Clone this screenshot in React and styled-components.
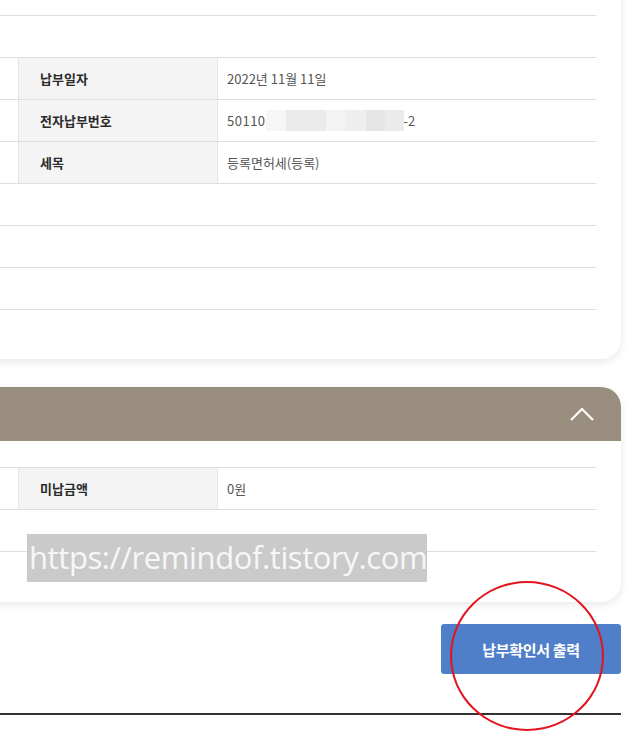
import React from 'react';
import styled, { createGlobalStyle } from 'styled-components';

const Global = createGlobalStyle`
  html, body {
    margin: 0;
    padding: 0;
    background: #fff;
    overflow: hidden;
  }
  body {
    font-family: "Noto Sans CJK KR", "Noto Sans", sans-serif;
    color: #333;
  }
`;

const Page = styled.div`
  width: 639px;
  height: 739px;
  overflow: hidden;
  position: relative;
`;

const Inner = styled.div`
  margin-left: -40px;
  width: 661px;
  display: flex;
  flex-direction: column;
`;

const Card = styled.div`
  position: relative;
  background: #fff;
  border-radius: 0 0 20px 20px;
  box-shadow: 0 3px 8px rgba(0, 0, 0, 0.09);
  padding: 0 25px 49px 25px;
  margin-top: ${p => p.$top || 0}px;
`;

const FoldCard = styled(Card)`
  border-radius: 20px;
  padding: 0 0 50px 0;
  overflow: hidden;
`;

const FoldHead = styled.div`
  height: 54px;
  background: #9a8f7e;
  display: flex;
  align-items: center;
  justify-content: flex-end;
  padding-right: 26px;
`;

const FoldBody = styled.div`
  padding: 26px 25px 0 25px;
`;

const Table = styled.div`
  display: flex;
  flex-direction: column;
`;

const Row = styled.div`
  display: grid;
  grid-template-columns: 33px 200px 1fr;
  height: 41px;
  border-top: ${p => (p.$first ? '1px solid #dedede' : 'none')};
  border-bottom: 1px solid #dedede;
  font-size: 13px;
`;

const Label = styled.div`
  background: #f4f4f4;
  border-left: 1px solid #e4e4e4;
  border-right: 1px solid #e8e8e8;
  display: flex;
  align-items: center;
  padding-left: 21px;
  font-weight: 700;
  color: #2a2a2a;
`;

const Value = styled.div`
  display: flex;
  align-items: center;
  padding-left: 9px;
  color: #555;
`;

const Blur = styled.span`
  display: inline-block;
  width: ${p => p.$w}px;
  height: 21px;
  background: ${p => p.$c};
`;

const Watermark = styled.div`
  position: absolute;
  left: 67px;
  top: 147px;
  width: 400px;
  height: 48px;
  background: #cacaca;
  color: #f7f7f7;
  font-family: "Open Sans", "Noto Sans", sans-serif;
  font-size: 31px;
  line-height: 46px;
  padding-left: 2px;
  box-sizing: border-box;
  white-space: nowrap;
  letter-spacing: -0.4px;
  overflow: hidden;
`;

const Actions = styled.div`
  display: flex;
  justify-content: flex-end;
  padding-top: 22px;
  position: relative;
`;

const PrintButton = styled.button`
  width: 180px;
  height: 50px;
  border: 0;
  border-radius: 3px;
  background: #4f7fc8;
  color: #fff;
  font-family: "Noto Sans CJK KR", sans-serif;
  font-size: 15px;
  font-weight: 700;
  letter-spacing: -0.3px;
`;

const Circle = styled.div`
  position: absolute;
  left: 490px;
  top: -21px;
  width: 150px;
  height: 146px;
  border: 2px solid #e2151f;
  border-radius: 50%;
  pointer-events: none;
`;

const BottomLine = styled.div`
  margin-top: 39px;
  height: 2px;
  width: 661px;
  background: #333;
`;

const rows = [
  { blank: true },
  { label: '납부일자', value: '2022년 11월 11일' },
  { label: '전자납부번호', value: 'masked' },
  { label: '세목', value: '등록면허세(등록)' },
  { blank: true },
  { blank: true },
  { blank: true },
];

const masked = ['#f6f6f6', '#ebebeb', '#ebebeb', '#f3f3f3', '#eeeeee', '#e6e6e6', '#ebebeb'];
const maskedW = [20, 20, 20, 20, 20, 20, 18];

const Cell = ({ row }) => {
  if (row.blank) return null;
  return (
    <>
      <div />
      <Label>{row.label}</Label>
      <Value>
        {row.value === 'masked' ? (
          <>
            <span style={{ letterSpacing: '0.5px' }}>50110</span>
            {masked.map((c, i) => <Blur key={i} $c={c} $w={maskedW[i]} />)}
            -2
          </>
        ) : row.value}
      </Value>
    </>
  );
};

export default function App() {
  return (
    <Page>
      <Global />
      <Inner>
        <Card $top={-26}>
          <Table>
            <Row />
            {rows.map((r, i) => (
              <Row key={i}>
                <Cell row={r} />
              </Row>
            ))}
          </Table>
        </Card>

        <FoldCard $top={28}>
          <FoldHead>
            <svg width="26" height="16" viewBox="0 0 26 16">
              <path d="M2 14 L13 3 L24 14" fill="none" stroke="#fff" strokeWidth="2.2" />
            </svg>
          </FoldHead>
          <FoldBody>
            <Table>
              <Row $first>
                <div />
                <Label>미납금액</Label>
                <Value>0원</Value>
              </Row>
              <Row />
            </Table>
          </FoldBody>
          <Watermark>https://remindof.tistory.com</Watermark>
        </FoldCard>

        <Actions>
          <PrintButton>납부확인서 출력</PrintButton>
          <Circle />
        </Actions>
        <BottomLine />
      </Inner>
    </Page>
  );
}
